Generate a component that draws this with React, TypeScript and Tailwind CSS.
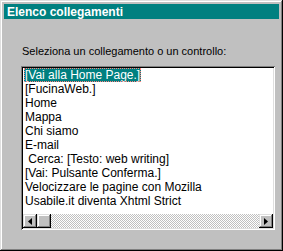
const ITEMS = [
  "[Vai alla Home Page.]",
  "[FucinaWeb.]",
  "Home",
  "Mappa",
  "Chi siamo",
  "E-mail",
  " Cerca: [Testo: web writing]",
  "[Vai: Pulsante Conferma.]",
  "Velocizzare le pagine con Mozilla",
  "Usabile.it diventa Xhtml Strict",
];

function ArrowButton({ dir }: { dir: "left" | "right" }) {
  return (
    <div className="flex h-[14px] w-[14px] shrink-0 items-center justify-center bg-[#c0c0c0] shadow-[inset_-1px_-1px_#000,inset_1px_1px_#dfdfdf,inset_-2px_-2px_#808080,inset_2px_2px_#fff]">
      <svg width="4" height="7" viewBox="0 0 4 7">
        {dir === "left" ? (
          <path d="M0 3.5 L4 0 L4 7 Z" fill="#000" />
        ) : (
          <path d="M4 3.5 L0 0 L0 7 Z" fill="#000" />
        )}
      </svg>
    </div>
  );
}

export default function App() {
  return (
    <div className="flex h-[251px] w-[283px] flex-col bg-[#c0c0c0] p-[4px] font-['Liberation_Sans',Arial,sans-serif] shadow-[inset_-1px_-1px_#000,inset_1px_1px_#dfdfdf,inset_-2px_-2px_#808080,inset_2px_2px_#fff]">
      <div className="flex h-[15px] items-center bg-[#008080] pl-[3px] text-[12px] font-bold text-white">
        Elenco collegamenti
      </div>
      <div className="flex flex-1 flex-col pl-[17px] pr-[4px] pt-[26px] pb-[17px]">
        <p className="pl-[1px] text-[11px] leading-[13px] text-black">
          Seleziona un collegamento o un controllo:
        </p>
        <div className="mt-[8px] flex flex-1 flex-col bg-white p-[2px] shadow-[inset_1px_1px_#808080,inset_-1px_-1px_#fff,inset_2px_2px_#000,inset_-2px_-2px_#dfdfdf]">
          <ul className="flex-1 overflow-hidden pl-[1px] text-[12px] leading-[14px] text-black">
            {ITEMS.map((item, i) => (
              <li key={item} className="whitespace-pre">
                {i === 0 ? (
                  <span className="inline-block bg-[#008080] px-[1px] text-white outline-1 -outline-offset-1 outline-dotted outline-[#ff8080]">
                    {item}
                  </span>
                ) : (
                  <span className="px-[1px]">{item}</span>
                )}
              </li>
            ))}
          </ul>
          <div className="flex h-[14px]">
            <ArrowButton dir="left" />
            <div className="h-[14px] w-[14px] shrink-0 bg-[#c0c0c0] shadow-[inset_-1px_-1px_#000,inset_1px_1px_#dfdfdf,inset_-2px_-2px_#808080,inset_2px_2px_#fff]" />
            <div className="flex-1 bg-[repeating-conic-gradient(#c0c0c0_0_25%,#fff_0_50%)] bg-[length:2px_2px]" />
            <ArrowButton dir="right" />
          </div>
        </div>
      </div>
    </div>
  );
}
